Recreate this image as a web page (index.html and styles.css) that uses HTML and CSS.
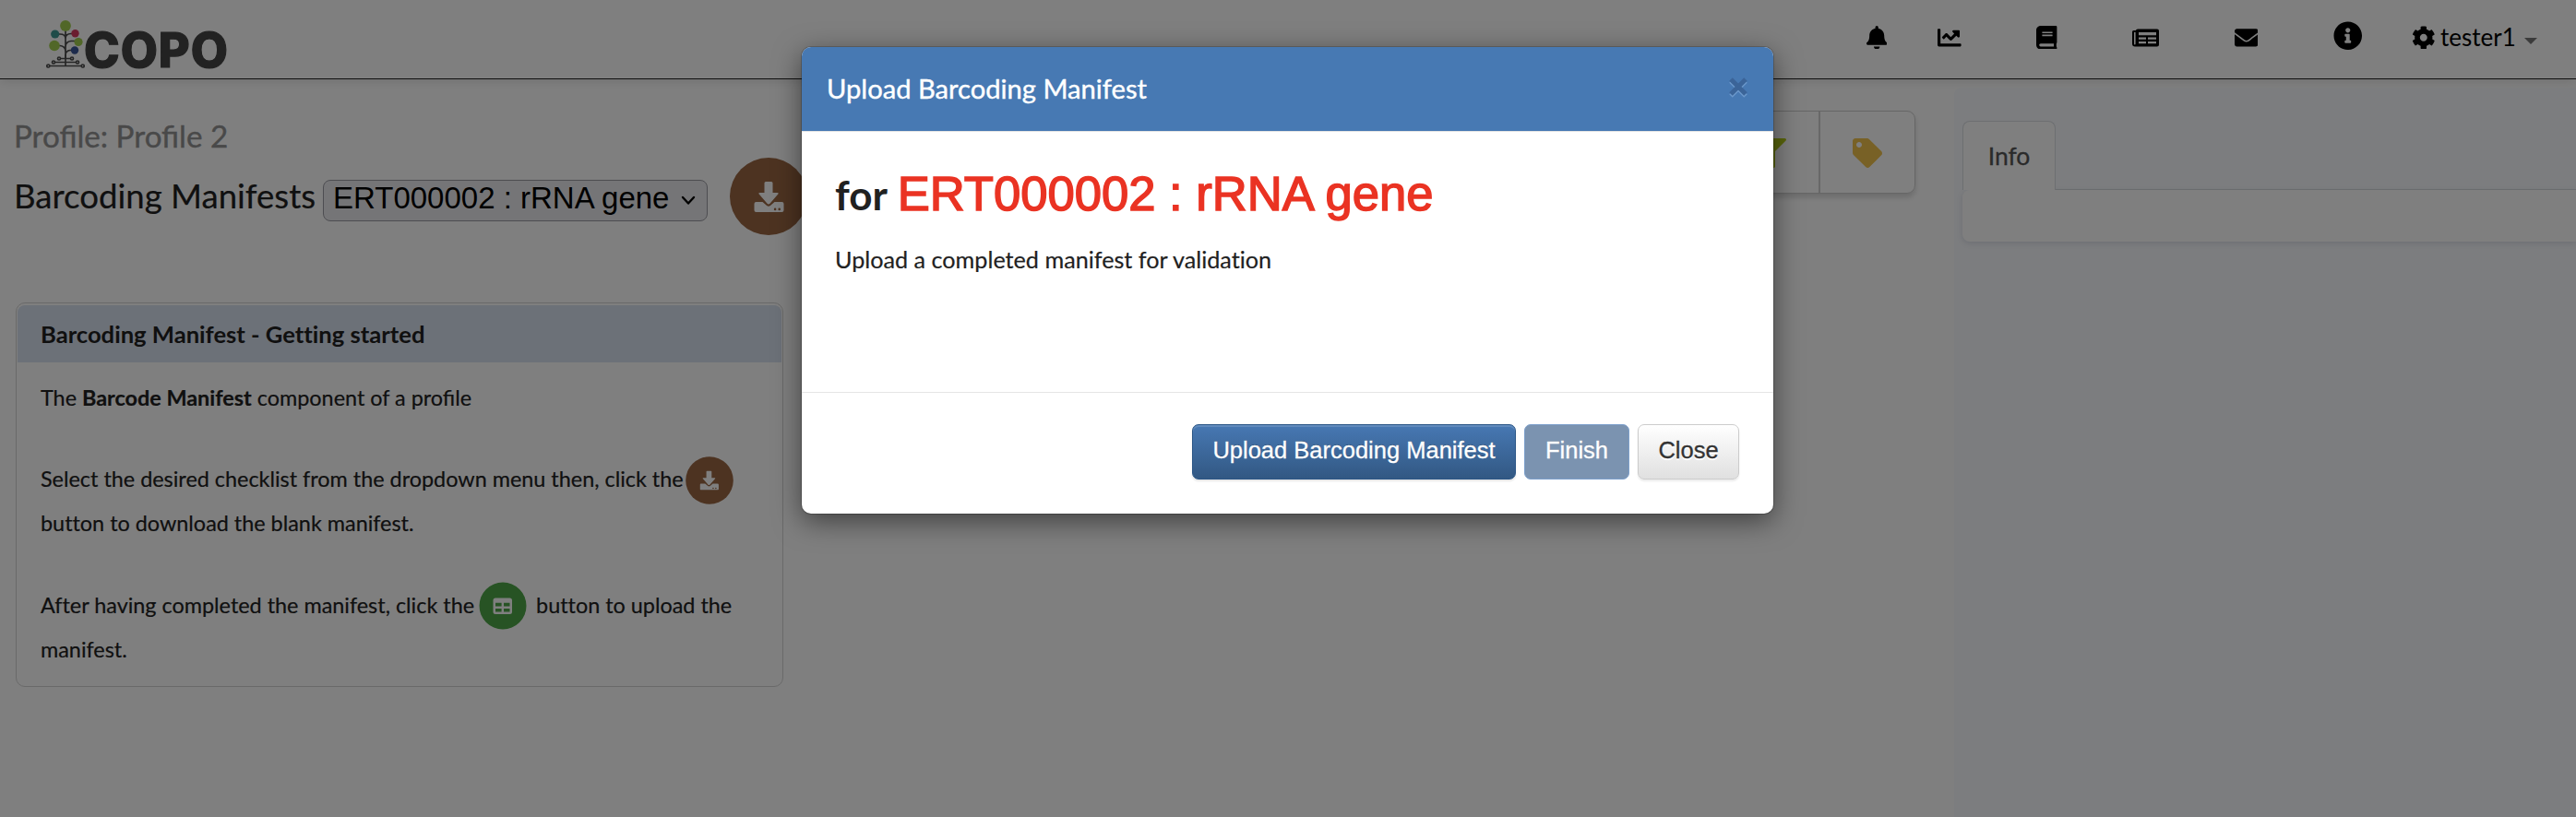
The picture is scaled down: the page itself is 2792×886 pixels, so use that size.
FILE: index.html
```html
<!DOCTYPE html>
<html lang="en">
<head>
<meta charset="utf-8">
<title>COPO - Barcoding Manifests</title>
<link rel="stylesheet" href="styles.css">
</head>
<body>
<svg class="defs" aria-hidden="true">
  <symbol id="download" viewBox="0 0 32 33">
    <path d="M12.500 0h6q1.500 0 1.500 1.500V12h5q2 0 .8 1.600l-8.600 10q-1.700 1.800-3.400 0l-8.600-10Q4 12 6 12h5V1.500Q11 0 12.500 0z"/>
    <path fill-rule="evenodd" d="M2 22h7l4.600 4q1.900 1.400 3.800 0L22 22h8q2 0 2 2v7q0 2-2 2H2q-2 0-2-2v-7q0-2 2-2zM22.600 28.600a1.300 1.300 0 1 0 0 2.600a1.300 1.300 0 1 0 0-2.600zM27.200 28.600a1.300 1.300 0 1 0 0 2.600a1.300 1.300 0 1 0 0-2.600z"/>
  </symbol>
</svg>

<header class="navbar">
  <div class="brand">
    <svg class="tree" viewBox="0 0 42 54">
      <g fill="none" stroke="#4c4c4c" stroke-width="1.700">
        <path d="M21 10v40M21 21q0-5-6-5h-5M21 21q0-5.500 6-5.500h4M21 35q0-6-6-6.500H9M21 30q0-6 6-6.500h7M21 39q0-5 5-5.500h5"/>
        <path d="M15.500 42.500h11M21 38v4.500M9.500 46.500h23M4 50.500h34"/>
        <circle cx="14" cy="42.500" r="1.500"/><circle cx="28" cy="42.500" r="1.500"/>
        <circle cx="8" cy="46.500" r="1.500"/><circle cx="34" cy="46.500" r="1.500"/>
        <circle cx="2.300" cy="50.500" r="1.500"/><circle cx="39.700" cy="50.500" r="1.500"/>
      </g>
      <circle cx="21" cy="7" r="5.900" fill="#a2cf50"/>
      <circle cx="9.700" cy="16" r="4.600" fill="#3f9892"/>
      <circle cx="31.500" cy="15.300" r="4.200" fill="#d63a5e"/>
      <circle cx="9" cy="28.500" r="5.800" fill="#a2cf50"/>
      <circle cx="35" cy="24.500" r="4.600" fill="#a2cf50"/>
      <circle cx="31" cy="33.500" r="4.200" fill="#3a5698"/>
    </svg>
    <span class="brand-name">COPO</span>
  </div>
  <nav class="nav-icons">
    <svg class="i-bell" viewBox="0 0 448 512"><path d="M224 512c35.320 0 63.970-28.650 63.970-64H160.030c0 35.350 28.650 64 63.970 64zm215.390-149.710c-19.320-20.760-55.470-51.990-55.470-154.290 0-77.700-54.480-139.900-127.940-155.160V32c0-17.670-14.320-32-31.980-32s-31.980 14.330-31.980 32v20.840C118.560 68.100 64.080 130.300 64.080 208c0 102.300-36.150 133.530-55.470 154.290-6 6.450-8.660 14.160-8.610 21.710.11 16.400 12.980 32 32.100 32h383.800c19.120 0 32-15.600 32.100-32 .05-7.550-2.610-15.270-8.610-21.710z"/></svg>
    <svg class="i-chart" viewBox="0 0 512 512"><path d="M496 384H64V80c0-8.840-7.160-16-16-16H16C7.160 64 0 71.160 0 80v336c0 17.670 14.330 32 32 32h464c8.840 0 16-7.160 16-16v-32c0-8.840-7.160-16-16-16zM464 96H345.940c-21.380 0-32.090 25.850-16.970 40.970l32.400 32.400L288 242.750l-73.370-73.370c-12.500-12.500-32.760-12.500-45.250 0l-68.690 68.690c-6.250 6.250-6.250 16.380 0 22.630l22.620 22.620c6.250 6.250 16.380 6.250 22.630 0L192 237.250l73.370 73.370c12.500 12.500 32.760 12.500 45.250 0l96-96 32.400 32.400c15.120 15.120 40.970 4.410 40.970-16.970V112c.01-8.840-7.150-16-15.990-16z"/></svg>
    <svg class="i-book" viewBox="0 0 448 512"><path d="M448 360V24c0-13.300-10.700-24-24-24H96C43 0 0 43 0 96v320c0 53 43 96 96 96h328c13.300 0 24-10.700 24-24v-16c0-7.500-3.500-14.300-8.900-18.700-4.200-15.400-4.200-59.300 0-74.700 5.400-4.300 8.900-11.100 8.900-18.600zM128 134c0-3.300 2.700-6 6-6h212c3.300 0 6 2.700 6 6v20c0 3.300-2.700 6-6 6H134c-3.300 0-6-2.700-6-6v-20zm0 64c0-3.300 2.700-6 6-6h212c3.300 0 6 2.700 6 6v20c0 3.300-2.700 6-6 6H134c-3.300 0-6-2.700-6-6v-20zm253.400 250H96c-17.700 0-32-14.300-32-32 0-17.600 14.400-32 32-32h285.400c-1.900 17.100-1.900 46.900 0 64z"/></svg>
    <svg class="i-news" viewBox="0 0 29 20"><path fill-rule="evenodd" d="M6 .5h21q2 0 2 2v15q0 2-2 2H3q-3 0-3-3v-13Q0 2 1.500 2H4Q4 .5 6 .5zM7 4v3.200h19V4zM7 9.400v2.300h8V9.400zM17 9.400v2.300h9V9.400zM7 14v2.200h8V14zM17 14v2.200h9V14zM2 4v12.500q0 1 .8 1t.8-1V4z"/></svg>
    <svg class="i-mail" viewBox="0 0 512 512"><path d="M502.300 190.800c3.900-3.100 9.700-.2 9.700 4.700V400c0 26.500-21.500 48-48 48H48c-26.500 0-48-21.500-48-48V195.600c0-5 5.700-7.800 9.700-4.700 22.400 17.400 52.100 39.500 154.100 113.600 21.100 15.400 56.700 47.800 92.200 47.600 35.700.3 72-32.800 92.300-47.600 102-74.100 131.600-96.300 154-113.700zM256 320c23.200.4 56.600-29.200 73.400-41.400 132.700-96.300 142.800-104.700 173.400-128.700 5.800-4.500 9.200-11.500 9.200-18.900v-19c0-26.500-21.500-48-48-48H48c-26.500 0-48 21.500-48 48v19c0 7.400 3.400 14.300 9.200 18.900 30.600 23.900 40.700 32.400 173.400 128.700 16.800 12.200 50.200 41.800 73.400 41.400z"/></svg>
    <svg class="i-info" viewBox="0 0 512 512"><path d="M256 8C119.043 8 8 119.083 8 256c0 136.997 111.043 248 248 248s248-111.003 248-248C504 119.083 392.957 8 256 8zm0 110c23.196 0 42 18.804 42 42s-18.804 42-42 42-42-18.804-42-42 18.804-42 42-42zm56 254c0 6.627-5.373 12-12 12h-88c-6.627 0-12-5.373-12-12v-24c0-6.627 5.373-12 12-12h12v-64h-12c-6.627 0-12-5.373-12-12v-24c0-6.627 5.373-12 12-12h64c6.627 0 12 5.373 12 12v100h12c6.627 0 12 5.373 12 12v24z"/></svg>
    <svg class="i-gear" viewBox="0 0 512 512"><path d="M487.400 315.700l-42.600-24.600c4.300-23.200 4.300-47 0-70.200l42.600-24.600c4.900-2.800 7.100-8.600 5.500-14-11.100-35.600-30-67.800-54.700-94.600-3.800-4.100-10-5.100-14.800-2.300L380.800 110c-17.900-15.400-38.500-27.300-60.800-35.100V25.800c0-5.600-3.900-10.500-9.400-11.700-36.700-8.200-74.300-7.800-109.200 0-5.500 1.200-9.400 6.100-9.400 11.700V75c-22.200 7.900-42.800 19.800-60.800 35.100L88.700 85.500c-4.900-2.800-11-1.900-14.800 2.300-24.700 26.700-43.600 58.900-54.700 94.600-1.700 5.400.6 11.200 5.500 14L67.300 221c-4.300 23.200-4.300 47 0 70.200l-42.600 24.600c-4.900 2.800-7.100 8.600-5.500 14 11.100 35.600 30 67.800 54.700 94.600 3.800 4.100 10 5.100 14.800 2.300l42.600-24.600c17.900 15.400 38.500 27.300 60.800 35.100v49.200c0 5.600 3.900 10.500 9.400 11.700 36.700 8.200 74.300 7.800 109.200 0 5.500-1.200 9.400-6.100 9.400-11.700v-49.200c22.200-7.900 42.800-19.800 60.800-35.100l42.600 24.600c4.900 2.800 11 1.900 14.800-2.300 24.700-26.700 43.600-58.900 54.700-94.600 1.500-5.500-.7-11.300-5.600-14.100zM256 336c-44.100 0-80-35.900-80-80s35.900-80 80-80 80 35.900 80 80-35.900 80-80 80z"/></svg>
    <span class="user">tester1</span>
    <span class="caret"></span>
  </nav>
</header>

<main class="page">
  <section class="content">
    <div class="left">
      <h3 class="profile">Profile: Profile 2</h3>
      <div class="title-row">
        <h2 class="title">Barcoding Manifests</h2>
        <div class="select"><span>ERT000002 : rRNA gene</span>
          <svg class="chevron" viewBox="0 0 16 11"><path d="M2 2l6 6.500L14 2"/></svg>
        </div>
        <span class="round"><svg class="round-icon"><use href="#download"/></svg></span>
      </div>
      <article class="card">
        <h4 class="card-head">Barcoding Manifest - Getting started</h4>
        <div class="card-body">
          <p>The <b>Barcode Manifest</b> component of a profile</p>
          <p>Select the desired checklist from the dropdown menu then, click the <svg class="chip chip-brown" viewBox="0 0 52 52"><circle cx="26" cy="26" r="25.800" fill="#9a6642"/><use class="chip-icon" href="#download" x="15.500" y="15.500" width="20.500" height="21"/></svg><br>button to download the blank manifest.</p>
          <p>After having completed the manifest, click the <svg class="chip chip-green" viewBox="0 0 52 52"><circle cx="26" cy="26" r="25.500" fill="#4ea648"/><path class="chip-icon" fill-rule="evenodd" d="M18 17.500h15.500q2.500 0 2.500 2.500v12.500q0 2.500-2.500 2.500H18q-2.500 0-2.500-2.500V20q0-2.500 2.500-2.500zM18 22.800v3.700h6.600v-3.700zM27 22.800v3.700h6.500v-3.700zM18 29v3.600h6.600V29zM27 29v3.600h6.500V29z"/></svg> button to upload the<br>manifest.</p>
        </div>
      </article>
    </div>
    <div class="toolbar">
      <div class="tool"><svg viewBox="0 0 512 512" fill="#b5cc18"><path d="M487.976 0H24.028C2.710 0-8.047 25.866 7.058 40.971L192 225.941V432c0 7.831 3.821 15.170 10.237 19.662l80 55.980C298.020 518.690 320 507.493 320 487.980V225.941l184.947-184.970C520.021 25.896 509.338 0 487.976 0z"/></svg></div>
      <div class="tool"><svg viewBox="0 0 512 512" fill="#f0c24c"><path d="M0 252.118V48C0 21.490 21.490 0 48 0h204.118a48 48 0 0 1 33.941 14.059l211.882 211.882c18.745 18.745 18.745 49.137 0 67.882L293.823 497.941c-18.745 18.745-49.137 18.745-67.882 0L14.059 286.059A48 48 0 0 1 0 252.118zM112 64c-26.510 0-48 21.490-48 48s21.490 48 48 48 48-21.490 48-48-21.490-48-48-48z"/></svg></div>
    </div>
  </section>
  <aside class="side">
    <div class="tabs"><span class="tab">Info</span></div>
    <div class="tab-body"></div>
  </aside>
</main>

<div class="backdrop">
  <div class="modal" role="dialog">
    <div class="modal-head">
      <h4 class="modal-title">Upload Barcoding Manifest</h4>
      <svg class="close" viewBox="0 0 22 24">
        <path d="M3 5l16 16M19 5L3 21" stroke="#6b98cb"/><path d="M3 3l16 16M19 3L3 19" stroke="#3b6498"/>
      </svg>
    </div>
    <div class="modal-body">
      <h1 class="for">for <span class="checklist">ERT000002 : rRNA gene</span></h1>
      <p class="hint">Upload a completed manifest for validation</p>
    </div>
    <div class="modal-foot">
      <button class="btn primary">Upload Barcoding Manifest</button>
      <button class="btn finish">Finish</button>
      <button class="btn plain">Close</button>
    </div>
  </div>
</div>
</body>
</html>
```
FILE: styles.css
```css
* { box-sizing: border-box; }
body {
  margin: 0; width: 2792px; height: 886px; overflow: hidden; position: relative;
  display: flex; flex-direction: column;
  background: #fff; color: #212121;
  font-family: Lato, "Liberation Sans", sans-serif;
}
h1, h2, h3, h4, p { margin: 0; font-weight: 400; }
svg { display: block; }
.defs { position: absolute; width: 0; height: 0; }

.navbar {
  flex: none; height: 86px; display: flex; justify-content: space-between;
  border-bottom: 1px solid #222; box-shadow: 0 2px 10px rgba(0, 0, 0, .12);
}
.brand { display: flex; align-items: flex-start; padding: 21px 0 0 50px; }
.tree { width: 42px; height: 54px; flex: none; }
.brand-name {
  font: 800 52px/52px Inter, sans-serif; letter-spacing: 1px; color: #444;
  padding-top: 8px; margin-left: -1px; -webkit-text-stroke: 1.200px #444;
}
.nav-icons { display: flex; align-items: center; height: 81px; padding-right: 42px; }
.nav-icons svg { flex: none; width: 25.600px; height: 25.600px; }
.nav-icons .i-bell { width: 22.400px; margin-right: 55px; }
.nav-icons .i-chart { margin-right: 81.500px; }
.nav-icons .i-book { width: 22.400px; margin-right: 81.500px; }
.nav-icons .i-news { width: 29px; height: 20px; margin-right: 81.500px; }
.nav-icons .i-mail { margin-right: 81.500px; }
.nav-icons .i-info { width: 31.500px; height: 31.500px; margin: -4px 54px 0 0; }
.user { width: 96px; padding-left: 5px; font-size: 26px; line-height: 36px; color: #000; margin-top: -1px; }
.caret { border: 7px solid transparent; border-top-color: #777; border-bottom: 0; margin-top: 7px; }

.page { flex: 1; display: flex; }
.content { width: 2118px; display: flex; justify-content: space-between; align-items: flex-start; padding-right: 42px; }
.left { padding: 41px 0 0 15px; }
.profile { font-size: 33.200px; line-height: 40px; color: #929292; -webkit-text-stroke: .4px #929292; }
.title-row { display: flex; align-items: center; height: 84px; margin-top: 4px; }
.title { width: 335px; white-space: nowrap; font-size: 36.600px; line-height: 44px; padding-bottom: 2px; -webkit-text-stroke: .2px; }
.select {
  width: 417px; height: 45px; margin-top: 8px; padding: 0 12px 5px 10px;
  display: flex; align-items: center; justify-content: space-between;
  border: 1px solid #9b9ba3; border-radius: 8px; background: #ebebee;
  font: 33px/38px "Liberation Sans", sans-serif; color: #000; white-space: nowrap;
}
.chevron { width: 16px; height: 11px; margin-top: 5px; fill: none; stroke: #000; stroke-width: 2.400; stroke-linecap: round; stroke-linejoin: round; }
.round { width: 84px; height: 84px; margin-left: 24px; border-radius: 50%; background: #9a6642; display: grid; place-items: center; flex: none; }
.round-icon { width: 33px; height: 33px; fill: #fff; }

.card { width: 832px; height: 417px; margin: 73px 0 0 2px; padding: 2px 1px; border: 1px solid #d3d3d3; border-radius: 10px; }
.card-head { height: 62px; padding-left: 25px; font-size: 25.600px; line-height: 62px; font-weight: 700; background: #d9e2f0; border-radius: 8px 8px 0 0; font-variant-ligatures: none; }
.card-body { padding: 14px 0 0 25px; font-size: 23.400px; line-height: 48.300px; white-space: nowrap; -webkit-text-stroke: .2px; }
.card-body p { margin-bottom: 40px; font-variant-ligatures: none; }
.card-body p:first-child { line-height: 48px; font-variant-ligatures: normal; }
.chip { display: inline-block; width: 52px; height: 52px; margin: -2px 0 -6px; vertical-align: -13px; stroke: none; }
.chip-brown { margin-left: -4px; }
.chip-green { margin-right: 4px; margin-left: -1px; vertical-align: -12px; }
.chip-icon { fill: #fff; }

.toolbar { display: flex; height: 90px; margin-top: 34px; border: 1px solid #ccc; border-radius: 9px; box-shadow: 0 4px 6px rgba(0, 0, 0, .16); }
.tool { width: 102px; display: grid; place-items: center; padding-top: 1px; }
.tool + .tool { width: 104px; border-left: 2px solid #d0d0d0; }
.tool svg { width: 32px; height: 32px; }

.side { flex: 1; margin-top: 9px; padding: 36px 0 0 9px; background: #f8fafe; border-radius: 8px 0 0; }
.tabs { height: 75px; display: flex; border-bottom: 1px solid #dadee3; }
.tab { width: 101px; height: 75px; text-align: center; font-size: 26.500px; line-height: 74px; color: #555; background: #fff; border: 1px solid #dadee3; border-bottom: 0; border-radius: 8px 8px 0 0; -webkit-text-stroke: .3px; }
.tab-body { height: 56px; background: #fff; border-radius: 8px 0 0 8px; box-shadow: 0 2px 6px rgba(50, 60, 90, .14); }

.backdrop { position: absolute; inset: 0; background: rgba(0, 0, 0, .5); }
.modal {
  position: absolute; left: 869px; top: 51px; width: 1053px; height: 506px; overflow: hidden;
  display: flex; flex-direction: column;
  background: #fff; border-radius: 10px; box-shadow: 0 8px 30px rgba(0, 0, 0, .5), 0 0 0 1px rgba(0, 0, 0, .18);
}
.modal-head { height: 92px; padding: 0 27px; display: flex; justify-content: space-between; border-bottom: 1px solid #e5e5e5; background: #4779b3; }
.modal-title { color: #fff; font-size: 29.150px; line-height: 90px; -webkit-text-stroke: .4px #fff; }
.close { width: 22px; height: 24px; margin-top: 32px; fill: none; stroke-width: 5; }
.modal-body { flex: 1; padding: 32px 36px; }
.for { font-size: 44px; line-height: 72px; font-weight: 700; }
.checklist { font: 400 52.600px/60px "Liberation Sans", sans-serif; color: #ea3323; -webkit-text-stroke: 1.500px #ea3323; margin-left: 1px; }
.hint { font-size: 25.200px; line-height: 36px; margin-top: 16px; font-variant-ligatures: none; -webkit-text-stroke: .2px; }
.modal-foot { height: 132px; padding: 34px 37px 0; display: flex; justify-content: flex-end; gap: 9px; border-top: 1px solid #e5e5e5; }
.btn {
  height: 60px; padding: 0 0 4px; border: 1px solid; border-radius: 7px;
  font: 25.500px/54px "Liberation Sans", sans-serif; color: #fff; white-space: nowrap; -webkit-text-stroke: .3px;
}
.primary { width: 351px; border-color: #2b5686; background: linear-gradient(#4778b3, #325883); text-shadow: 0 -1px 0 rgba(0, 0, 0, .25); box-shadow: inset 0 2px 0 rgba(255, 255, 255, .15), 0 2px 2px rgba(0, 0, 0, .1); }
.finish { width: 114px; border-color: #7c9fcb; background: #7b93b0; text-shadow: 0 -1px 0 rgba(0, 0, 0, .12); }
.plain { width: 110px; border-color: #ccc; color: #333; background: linear-gradient(#fff, #e0e0e0); text-shadow: 0 2px 0 #fff; box-shadow: 0 2px 2px rgba(0, 0, 0, .08); }
```
